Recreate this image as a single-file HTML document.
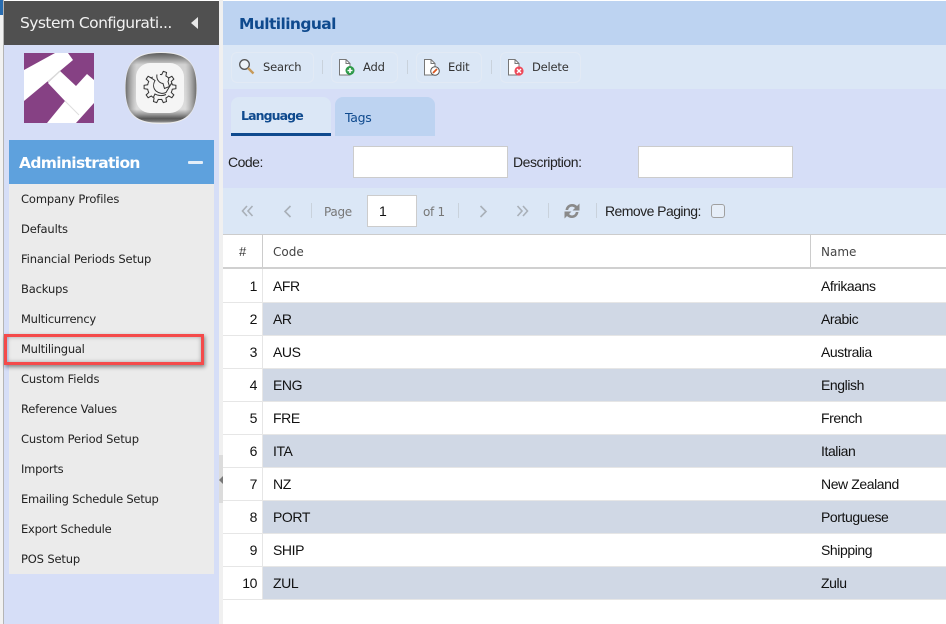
<!DOCTYPE html>
<html><head><meta charset="utf-8">
<style>
html,body{margin:0;padding:0;width:946px;height:624px;overflow:hidden;background:#fff}
*{box-sizing:border-box}
.a{position:absolute;white-space:nowrap}
.os{font-family:"DejaVu Sans","Liberation Sans",sans-serif}
.ls{font-family:"Liberation Sans",sans-serif}
.mi{left:21px;font-size:11.5px;letter-spacing:-.15px;color:#222;line-height:16px}
.tb{font-size:11.5px;letter-spacing:-.2px;color:#333;line-height:16px;top:59px}
.sep{width:1px;background:#c9d2dc}
.box{border:1px solid #e2eaf5;border-radius:6px;top:52px;height:31px}
.c{font-size:14px;letter-spacing:-.42px;line-height:16px;color:#111;font-family:"Liberation Sans",sans-serif}
.alt{left:263px;width:683px;height:32px;background:#d0d8e5}
.ln{left:223px;width:723px;height:1px;background:#e6e6e6}
</style></head>
<body>
<div class="a" style="left:0;top:0;width:3px;height:624px;background:#f2f2f2"></div>
<div class="a" style="left:0;top:0;width:3px;height:15px;background:#2a6db0"></div>
<div class="a" style="left:3px;top:0;width:1px;height:624px;background:#b5b5b5"></div>
<div class="a" style="left:4px;top:1px;width:215px;height:623px;background:#d6def7"></div>
<div class="a" style="left:4px;top:1px;width:215px;height:44px;background:#505050"></div>
<div class="a os" style="left:20px;top:13px;font-size:15.5px;letter-spacing:-.55px;line-height:20px;color:#f2f2f2">System Configurati...</div>
<svg class="a" style="left:191px;top:17px" width="9" height="12"><path d="M7 0V12L0 6Z" fill="#e8e8e8"/></svg>

<svg class="a" style="left:24px;top:53px" width="70" height="70" viewBox="0 0 70 70">
<rect width="70" height="70" fill="#864184"/>
<polygon points="0,17 31,0 44,0 49,7 24,28 0,48" fill="#fff"/>
<polygon points="24,30 36,18 52,33 63,21 70,27 70,50 52,70 23,70 41,48" fill="#fff"/>
<path d="M24 29L36 18" stroke="#d8d8d8" stroke-width="1.5" fill="none"/>
<path d="M41 48L55 62" stroke="#dddddd" stroke-width="1" fill="none"/>
</svg>

<svg class="a" style="left:124px;top:51px" width="74" height="74" viewBox="0 0 74 74">
<defs>
<linearGradient id="g" x1="0" y1="0" x2="0" y2="1"><stop offset="0" stop-color="#505050"/><stop offset=".08" stop-color="#8a8a8a"/><stop offset=".17" stop-color="#d8d8d8"/><stop offset=".8" stop-color="#e4e4e4"/><stop offset=".87" stop-color="#999"/><stop offset=".93" stop-color="#505050"/><stop offset=".97" stop-color="#777"/><stop offset="1" stop-color="#f4f4f4"/></linearGradient>
<linearGradient id="h" x1="0" y1="0" x2="1" y2="0"><stop offset="0" stop-color="#555" stop-opacity=".85"/><stop offset=".16" stop-color="#999" stop-opacity=".1"/><stop offset=".84" stop-color="#999" stop-opacity=".1"/><stop offset="1" stop-color="#555" stop-opacity=".85"/></linearGradient>
</defs>
<path d="M37 1.5C62 1.5 72.5 10 72.5 37S62 72.5 37 72.5 1.5 64 1.5 37 12 1.5 37 1.5Z" fill="url(#g)" stroke="#f2f2f2"/>
<path d="M37 1.5C62 1.5 72.5 10 72.5 37S62 72.5 37 72.5 1.5 64 1.5 37 12 1.5 37 1.5Z" fill="url(#h)"/>
<rect x="12" y="12" width="48" height="50" rx="14" fill="#f5f5f5"/>
<g transform="translate(36 36)" fill="none" stroke="#333" stroke-width="1">
<g id="t"><path d="M11.9 -3.9L12.3 -2.2 15.9 -1.7 15.9 1.7 12.3 2.2 11.9 3.9"/></g>
<path transform="rotate(36)" d="M11.9 -3.9L12.3 -2.2 15.9 -1.7 15.9 1.7 12.3 2.2 11.9 3.9"/>
<path transform="rotate(72)" d="M11.9 -3.9L12.3 -2.2 15.9 -1.7 15.9 1.7 12.3 2.2 11.9 3.9"/>
<path transform="rotate(108)" d="M11.9 -3.9L12.3 -2.2 15.9 -1.7 15.9 1.7 12.3 2.2 11.9 3.9"/>
<path transform="rotate(144)" d="M11.9 -3.9L12.3 -2.2 15.9 -1.7 15.9 1.7 12.3 2.2 11.9 3.9"/>
<path transform="rotate(180)" d="M11.9 -3.9L12.3 -2.2 15.9 -1.7 15.9 1.7 12.3 2.2 11.9 3.9"/>
<path transform="rotate(216)" d="M11.9 -3.9L12.3 -2.2 15.9 -1.7 15.9 1.7 12.3 2.2 11.9 3.9"/>
<path transform="rotate(288)" d="M11.9 -3.9L12.3 -2.2 15.9 -1.7 15.9 1.7 12.3 2.2 11.9 3.9"/>
<path transform="rotate(324)" d="M11.9 -3.9L12.3 -2.2 15.9 -1.7 15.9 1.7 12.3 2.2 11.9 3.9"/>
<path d="M-9.6 -9.6L-5 -6.5C-7 -3 -7 1 -4 4 -1 6.5 3 7 6 5.5L11.6 -3.9"/>
<path d="M-3 -12.5C-4 -8 -1 -4 3 -3.5L4.5 1.5 9.5 -.5 8 -5.5C9 -7 9 -9 8 -9.5"/>
<path d="M-6.5 10L-5 7C-2 9 3 9 6 7.5"/>
</g>
</svg>

<div class="a" style="left:9px;top:140px;width:205px;height:44px;background:#5ea1dd"></div>
<div class="a os" style="left:19px;top:153px;font-size:15.5px;font-weight:700;letter-spacing:-.66px;line-height:20px;color:#fff">Administration</div>
<div class="a" style="left:188px;top:161px;width:15px;height:3px;background:#e4eef8;border-radius:1px"></div>
<div class="a" style="left:9px;top:184px;width:205px;height:390px;background:#ebebeb"></div>
<div class="a os mi" style="top:191px;letter-spacing:-.12px">Company Profiles</div>
<div class="a os mi" style="top:221px">Defaults</div>
<div class="a os mi" style="top:251px;letter-spacing:-.12px">Financial Periods Setup</div>
<div class="a os mi" style="top:281px">Backups</div>
<div class="a os mi" style="top:311px;letter-spacing:-.25px">Multicurrency</div>
<div class="a os mi" style="top:341px;letter-spacing:-.25px">Multilingual</div>
<div class="a os mi" style="top:371px">Custom Fields</div>
<div class="a os mi" style="top:401px;letter-spacing:-.2px">Reference Values</div>
<div class="a os mi" style="top:431px;letter-spacing:-.15px">Custom Period Setup</div>
<div class="a os mi" style="top:461px;letter-spacing:-.25px">Imports</div>
<div class="a os mi" style="top:491px;letter-spacing:-.25px">Emailing Schedule Setup</div>
<div class="a os mi" style="top:521px;letter-spacing:-.25px">Export Schedule</div>
<div class="a os mi" style="top:551px">POS Setup</div>
<div class="a" style="left:4px;top:334px;width:200px;height:31px;border:3px solid #f44a4a;box-shadow:1px 2px 4px rgba(0,0,0,.45),inset 0 0 4px rgba(0,0,0,.3)"></div>

<div class="a" style="left:219px;top:0;width:4px;height:624px;background:#f0f0f0"></div>
<div class="a" style="left:219px;top:455px;width:4px;height:48px;background:#dcdcdc"></div>
<svg class="a" style="left:219px;top:476px" width="4" height="8"><path d="M4 0V8L0 4Z" fill="#777"/></svg>

<div class="a" style="left:223px;top:1px;width:723px;height:44px;background:#bdd3f1"></div>
<div class="a os" style="left:239px;top:14px;font-size:15.5px;font-weight:700;letter-spacing:-.6px;line-height:20px;color:#0f4a8e">Multilingual</div>
<div class="a" style="left:223px;top:45px;width:723px;height:44px;background:#dbe7f6"></div>
<div class="a" style="left:223px;top:89px;width:723px;height:99px;background:#d6def7"></div>

<div class="a box" style="left:231px;width:83px"></div>
<div class="a box" style="left:331px;width:67px"></div>
<div class="a box" style="left:416px;width:66px"></div>
<div class="a box" style="left:500px;width:81px"></div>
<div class="a sep" style="left:322px;top:60px;height:14px"></div>
<div class="a sep" style="left:407px;top:60px;height:14px"></div>
<div class="a sep" style="left:491px;top:60px;height:14px"></div>

<svg class="a" style="left:238px;top:58px" width="18" height="18"><circle cx="6.5" cy="6.5" r="4.8" fill="#eef3f8" stroke="#555" stroke-width="1.3"/><path d="M10 10L15.5 15.5" stroke="#c79a5a" stroke-width="2.4"/></svg>
<div class="a os tb" style="left:263px">Search</div>
<svg class="a" style="left:338px;top:58px" width="18" height="19"><path d="M1.5 1.5H8L12 5.5V17H1.5Z" fill="#fff" stroke="#777"/><path d="M8 1.5V5.5H12" fill="none" stroke="#777"/><circle cx="12" cy="12.5" r="4.5" fill="#2e9a4a"/><path d="M9.5 12.5H14.5M12 10V15" stroke="#fff" stroke-width="1.6"/></svg>
<div class="a os tb" style="left:363px">Add</div>
<svg class="a" style="left:423px;top:58px" width="18" height="19"><path d="M1.5 1.5H8L12 5.5V17H1.5Z" fill="#fff" stroke="#777"/><path d="M8 1.5V5.5H12" fill="none" stroke="#777"/><circle cx="12" cy="13" r="4.3" fill="#fff" stroke="#555"/><path d="M10 15L14 11" stroke="#d9541e" stroke-width="1.8"/></svg>
<div class="a os tb" style="left:448px">Edit</div>
<svg class="a" style="left:507px;top:58px" width="18" height="19"><path d="M1.5 1.5H8L12 5.5V17H1.5Z" fill="#fff" stroke="#777"/><path d="M8 1.5V5.5H12" fill="none" stroke="#777"/><circle cx="12" cy="13" r="4.6" fill="#ee4a5a"/><path d="M10 11L14 15M14 11L10 15" stroke="#fff" stroke-width="1.4"/></svg>
<div class="a os tb" style="left:532px">Delete</div>

<div class="a" style="left:231px;top:97px;width:100px;height:39px;background:#dbe7f6;border-radius:8px 8px 0 0;border-bottom:3px solid #0f4a8e"></div>
<div class="a os" style="left:241px;top:108px;font-size:12.5px;font-weight:700;letter-spacing:-.9px;line-height:16px;color:#0f4a8e">Language</div>
<div class="a" style="left:335px;top:97px;width:100px;height:39px;background:#bdd3f1;border-radius:8px 8px 0 0"></div>
<div class="a os" style="left:345px;top:110px;font-size:12.5px;letter-spacing:-.3px;line-height:16px;color:#0f4a8e">Tags</div>

<div class="a ls" style="left:228px;top:154px;font-size:14px;letter-spacing:-.5px;line-height:16px;color:#222">Code:</div>
<div class="a" style="left:353px;top:146px;width:155px;height:32px;background:#fff;border:1px solid #ccc"></div>
<div class="a ls" style="left:513px;top:154px;font-size:14px;letter-spacing:-.45px;line-height:16px;color:#222">Description:</div>
<div class="a" style="left:638px;top:146px;width:155px;height:32px;background:#fff;border:1px solid #ccc"></div>

<div class="a" style="left:223px;top:188px;width:723px;height:46px;background:#dbe7f6"></div>
<svg class="a" style="left:241px;top:205px" width="13" height="12" fill="none" stroke="#a9b0b8" stroke-width="1.6"><path d="M6 1L1.5 6 6 11M11.5 1L7 6 11.5 11"/></svg>
<svg class="a" style="left:283px;top:205px" width="9" height="13" fill="none" stroke="#a9b0b8" stroke-width="1.6"><path d="M7.5 1L2 6.5 7.5 12"/></svg>
<div class="a sep" style="left:311px;top:203px;height:15px"></div>
<div class="a os" style="left:324px;top:204px;font-size:12px;letter-spacing:-.3px;line-height:16px;color:#777">Page</div>
<div class="a ls" style="left:367px;top:195px;width:50px;height:32px;background:#fff;border:1px solid #ccc;font-size:14px;line-height:31px;padding-left:11px;color:#111">1</div>
<div class="a os" style="left:423px;top:204px;font-size:12px;letter-spacing:-.3px;line-height:16px;color:#777">of 1</div>
<div class="a sep" style="left:458px;top:203px;height:15px"></div>
<svg class="a" style="left:479px;top:205px" width="9" height="13" fill="none" stroke="#a9b0b8" stroke-width="1.6"><path d="M1.5 1L7 6.5 1.5 12"/></svg>
<svg class="a" style="left:516px;top:205px" width="13" height="12" fill="none" stroke="#a9b0b8" stroke-width="1.6"><path d="M1.5 1L6 6 1.5 11M7 1L11.5 6 7 11"/></svg>
<div class="a sep" style="left:548px;top:203px;height:15px"></div>
<svg class="a" style="left:563px;top:202px" width="18" height="18" fill="#8a8a8a"><path d="M2.5 8C3 4 6 2 9 2 11.5 2 13 3 14 4L16.5 1.5V8.5H9.5L12 6C11 5 10 4.6 9 4.6 7 4.6 5.5 6 5.2 8Z"/><path d="M15.5 10C15 14 12 16 9 16 6.5 16 5 15 4 14L1.5 16.5V9.5H8.5L6 12C7 13 8 13.4 9 13.4 11 13.4 12.5 12 12.8 10Z"/></svg>
<div class="a sep" style="left:596px;top:203px;height:15px"></div>
<div class="a ls" style="left:605px;top:203px;font-size:14px;letter-spacing:-.55px;line-height:16px;color:#222">Remove Paging:</div>
<div class="a" style="left:711px;top:204px;width:14px;height:14px;border:1.5px solid #a0a0a0;border-radius:3px;background:#e6eef8"></div>

<div class="a" style="left:223px;top:234px;width:723px;height:1px;background:#ccc"></div>
<div class="a" style="left:223px;top:267px;width:723px;height:2px;background:#d0d0d0"></div>
<div class="a" style="left:262px;top:235px;width:1px;height:32px;background:#ccc"></div>
<div class="a" style="left:810px;top:235px;width:1px;height:32px;background:#ccc"></div>
<div class="a ls" style="left:239px;top:244px;font-size:13px;line-height:16px;color:#333">#</div>
<div class="a os" style="left:273px;top:244px;font-size:12px;letter-spacing:0;line-height:16px;color:#444">Code</div>
<div class="a os" style="left:821px;top:244px;font-size:12px;letter-spacing:0;line-height:16px;color:#444">Name</div>

<div class="a alt" style="top:303px"></div>
<div class="a alt" style="top:369px"></div>
<div class="a alt" style="top:435px"></div>
<div class="a alt" style="top:501px"></div>
<div class="a alt" style="top:567px"></div>
<div class="a ln" style="top:302px"></div>
<div class="a ln" style="top:335px"></div>
<div class="a ln" style="top:368px"></div>
<div class="a ln" style="top:401px"></div>
<div class="a ln" style="top:434px"></div>
<div class="a ln" style="top:467px"></div>
<div class="a ln" style="top:500px"></div>
<div class="a ln" style="top:533px"></div>
<div class="a ln" style="top:566px"></div>
<div class="a ln" style="top:599px"></div>
<div class="a" style="left:262px;top:269px;width:1px;height:331px;background:#e6e6e6"></div>

<div class="a c" style="left:223px;width:34px;text-align:right;top:278px">1</div><div class="a c" style="left:273px;top:278px">AFR</div><div class="a c" style="left:821px;top:278px">Afrikaans</div>
<div class="a c" style="left:223px;width:34px;text-align:right;top:311px">2</div><div class="a c" style="left:273px;top:311px">AR</div><div class="a c" style="left:821px;top:311px">Arabic</div>
<div class="a c" style="left:223px;width:34px;text-align:right;top:344px">3</div><div class="a c" style="left:273px;top:344px">AUS</div><div class="a c" style="left:821px;top:344px">Australia</div>
<div class="a c" style="left:223px;width:34px;text-align:right;top:377px">4</div><div class="a c" style="left:273px;top:377px">ENG</div><div class="a c" style="left:821px;top:377px">English</div>
<div class="a c" style="left:223px;width:34px;text-align:right;top:410px">5</div><div class="a c" style="left:273px;top:410px">FRE</div><div class="a c" style="left:821px;top:410px">French</div>
<div class="a c" style="left:223px;width:34px;text-align:right;top:443px">6</div><div class="a c" style="left:273px;top:443px">ITA</div><div class="a c" style="left:821px;top:443px">Italian</div>
<div class="a c" style="left:223px;width:34px;text-align:right;top:476px">7</div><div class="a c" style="left:273px;top:476px">NZ</div><div class="a c" style="left:821px;top:476px">New Zealand</div>
<div class="a c" style="left:223px;width:34px;text-align:right;top:509px">8</div><div class="a c" style="left:273px;top:509px">PORT</div><div class="a c" style="left:821px;top:509px">Portuguese</div>
<div class="a c" style="left:223px;width:34px;text-align:right;top:542px">9</div><div class="a c" style="left:273px;top:542px">SHIP</div><div class="a c" style="left:821px;top:542px">Shipping</div>
<div class="a c" style="left:223px;width:34px;text-align:right;top:575px">10</div><div class="a c" style="left:273px;top:575px">ZUL</div><div class="a c" style="left:821px;top:575px">Zulu</div>
</body></html>
